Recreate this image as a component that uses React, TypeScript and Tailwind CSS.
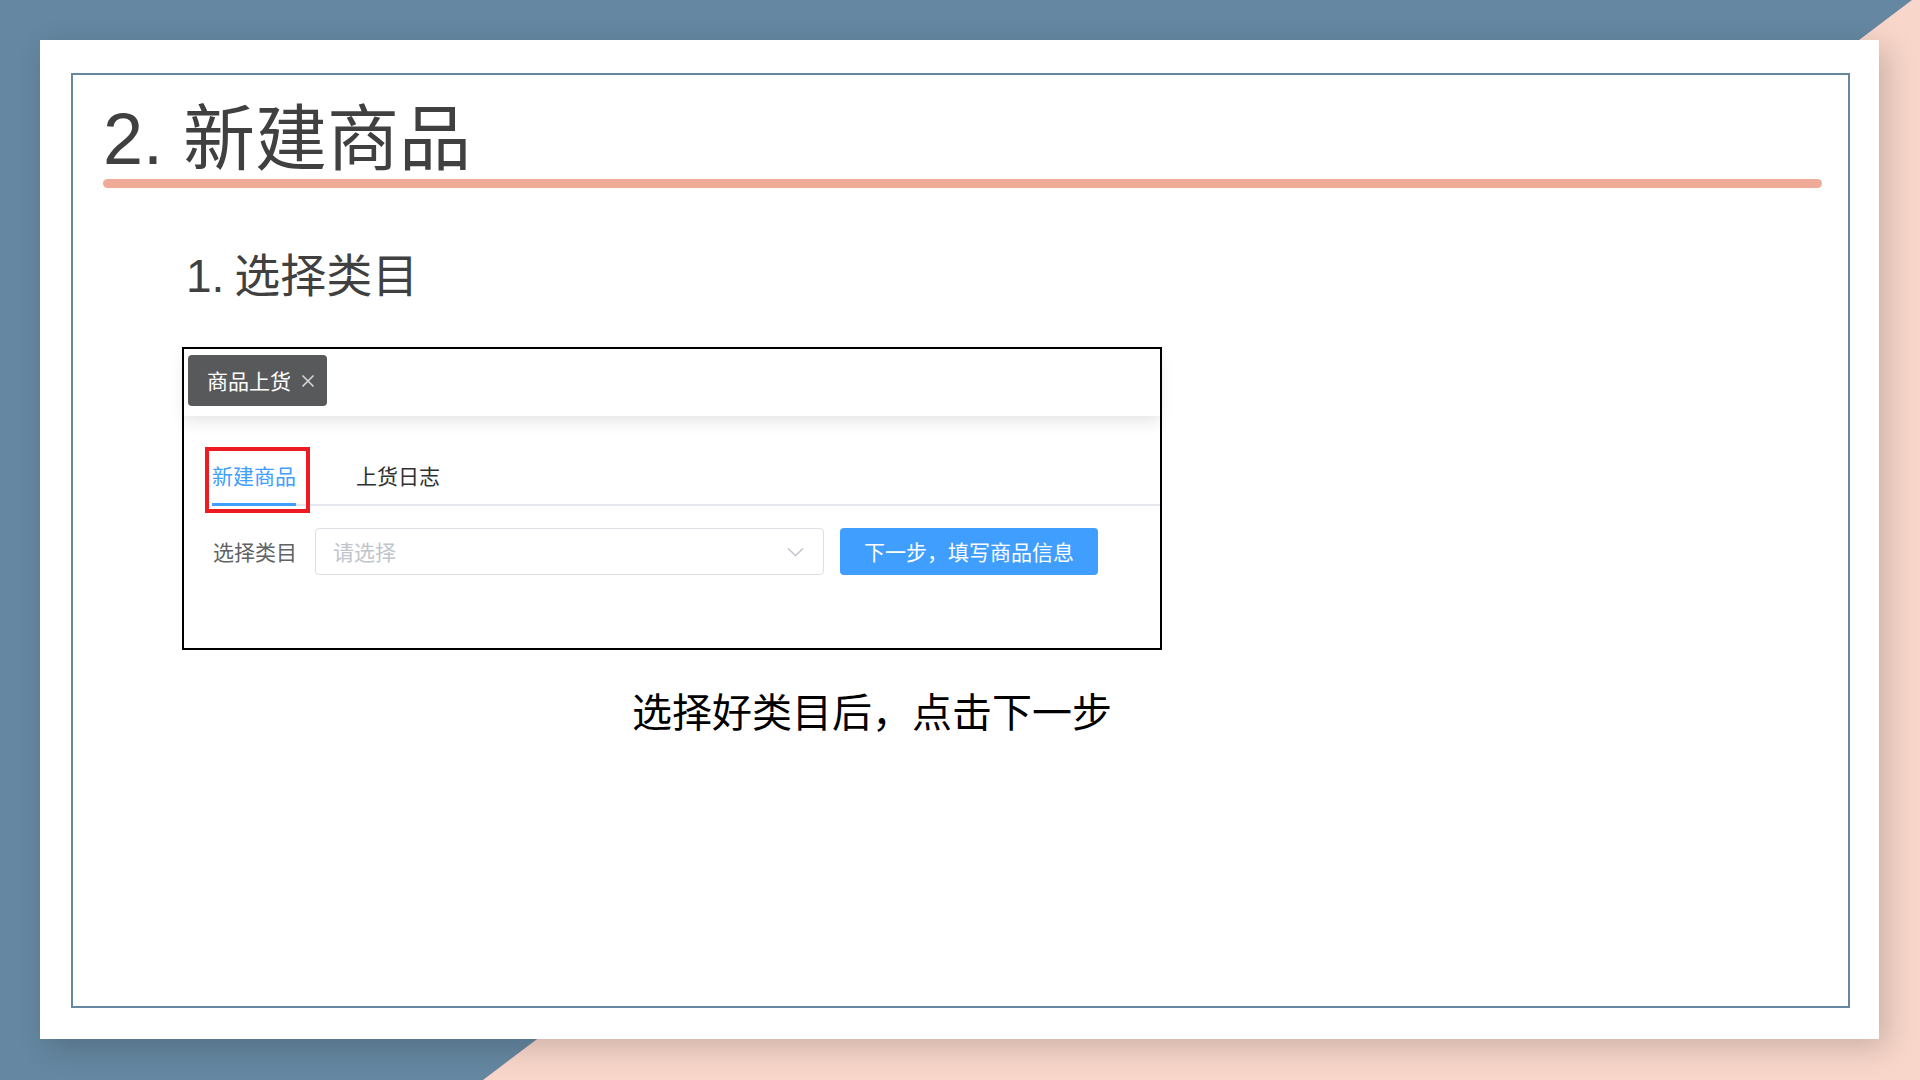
import React from "react";

const F = "[font-family:'Liberation_Sans','Noto_Sans_CJK_SC',sans-serif]";

export default function App() {
  return (
    <div className={`relative w-[1920px] h-[1080px] overflow-hidden bg-[#6587A1] ${F}`}>
      <div className="absolute inset-0 bg-[#F8D6CA] [clip-path:polygon(1912px_0,1920px_0,1920px_1080px,483px_1080px)]" />
      <div className="relative pt-[40px] pl-[40px]">
        <div className="w-[1839px] h-[999px] bg-white shadow-[8px_8px_28px_rgba(0,0,0,0.18)] pt-[33px] pl-[31px]">
          <div className="w-[1779px] h-[935px] border-2 border-[#6587A1] pl-[30px] pt-[28px]">
            <div className="text-[72px] leading-none text-[#404040] whitespace-nowrap">2. 新建商品</div>
            <div className="mt-[4px] w-[1719px] h-[9px] rounded-full bg-[#EDAB98]" />
            <div className="mt-[65px] ml-[83px] text-[46px] leading-none text-[#404040] whitespace-nowrap">
              <span className="mr-[-3px]">1. </span>选择类目
            </div>
            <div className="relative mt-[48px] ml-[79px] w-[980px] h-[303px] border-2 border-black bg-white [font-family:'Noto_Sans_CJK_SC',sans-serif]">
              <div className="h-[67px] pt-[6px] pl-[4px] shadow-[0_6px_14px_rgba(0,0,0,0.10)]">
                <div className="flex items-center h-[51px] w-[139px] rounded-[4px] bg-[#58595B] pl-[19px] text-white text-[21px] leading-none">
                  <span>商品上货</span>
                  <svg className="ml-[10px]" width="14" height="14" viewBox="0 0 14 14" fill="none" stroke="#D8D8D8" strokeWidth="1.6">
                    <path d="M1.5 1.5 L12.5 12.5 M12.5 1.5 L1.5 12.5" />
                  </svg>
                </div>
              </div>
              <div className="mt-[49px] ml-[28px] flex border-b-2 border-[#E4E7ED] text-[21px] leading-none">
                <div className="relative pb-[18px] text-[#409EFF]">
                  新建商品
                  <div className="absolute left-0 right-0 bottom-[-2px] h-[3px] bg-[#409EFF]" />
                </div>
                <div className="ml-[60px] pb-[18px] text-[#303133]">上货日志</div>
              </div>
              <div className="mt-[22px] ml-[29px] flex items-center">
                <div className="w-[84px] text-[21px] leading-none text-[#606266]">选择类目</div>
                <div className="ml-[18px] w-[509px] h-[47px] rounded-[4px] border border-[#DCDFE6] flex items-center pl-[17px] pr-[19px] justify-between">
                  <span className="text-[21px] leading-none text-[#C0C4CC]">请选择</span>
                  <svg width="17" height="10" viewBox="0 0 17 10" fill="none" stroke="#C0C4CC" strokeWidth="1.5">
                    <path d="M1 1.5 L8.5 8.5 L16 1.5" />
                  </svg>
                </div>
                <div className="ml-[16px] w-[258px] h-[47px] rounded-[4px] bg-[#409EFF] flex items-center justify-center text-white text-[21px] leading-none">
                  下一步，填写商品信息
                </div>
              </div>
              <div className="absolute left-[21px] top-[98px] w-[105px] h-[66px] border-[4px] border-[#ED1C24]" />
            </div>
            <div className="mt-[43px] ml-[529px] text-[40px] leading-none text-black whitespace-nowrap">选择好类目后，点击下一步</div>
          </div>
        </div>
      </div>
    </div>
  );
}
